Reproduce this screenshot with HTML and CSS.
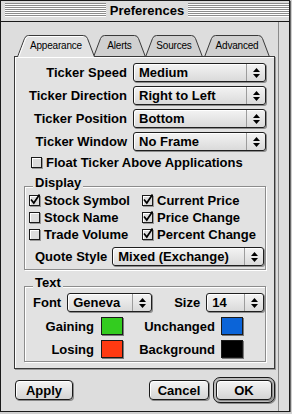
FILE: index.html
```html
<!DOCTYPE html>
<html lang="en">
<head>
  <meta charset="UTF-8" />
  <meta name="viewport" content="width=device-width, initial-scale=1" />
  <title>Preferences</title>
  <link rel="stylesheet" href="styles.css">
</head>
<body>
  <div class="window">
    <!-- Title bar -->
    <div class="titlebar">
      <span class="stripes"></span>
      <span class="title">Preferences</span>
      <span class="stripes"></span>
    </div>

    <div class="main">
      <!-- Tabs -->
      <div class="tabs">
        <div class="tab active tab-appearance">
          <svg width="78" height="22"><path class="edge" d="M0.5,22 L7.5,3.5 Q8.6,0.5 11.5,0.5 H66.5 Q69.4,0.5 70.5,3.5 L77.5,22"/><path class="shine" d="M1.9,21.5 L8.6,4 Q9.5,1.5 11.5,1.5 H66"/></svg>
          <span>Appearance</span>
        </div>
        <div class="tab tab-alerts">
          <svg width="53" height="22"><path class="edge" d="M0.5,22 L7.5,3.5 Q8.6,0.5 11.5,0.5 H41.5 Q44.4,0.5 45.5,3.5 L52.5,22"/></svg>
          <span>Alerts</span>
        </div>
        <div class="tab tab-sources">
          <svg width="58" height="22"><path class="edge" d="M0.5,22 L7.5,3.5 Q8.6,0.5 11.5,0.5 H46.5 Q49.4,0.5 50.5,3.5 L57.5,22"/></svg>
          <span>Sources</span>
        </div>
        <div class="tab tab-advanced">
          <svg width="66" height="22"><path class="edge" d="M0.5,22 L7.5,3.5 Q8.6,0.5 11.5,0.5 H54.5 Q57.4,0.5 58.5,3.5 L65.5,22"/></svg>
          <span>Advanced</span>
        </div>
      </div>

      <div class="panel">
        <div class="field">
          <span class="field-label">Ticker Speed</span>
          <div class="popup popup-wide"><span class="value">Medium</span><span class="arrows"><svg width="7" height="10"><path d="M0,4 L3.5,0 L7,4 Z M0,6 L7,6 L3.5,10 Z"/></svg></span></div>
        </div>
        <div class="field">
          <span class="field-label">Ticker Direction</span>
          <div class="popup popup-wide"><span class="value">Right to Left</span><span class="arrows"><svg width="7" height="10"><path d="M0,4 L3.5,0 L7,4 Z M0,6 L7,6 L3.5,10 Z"/></svg></span></div>
        </div>
        <div class="field">
          <span class="field-label">Ticker Position</span>
          <div class="popup popup-wide"><span class="value">Bottom</span><span class="arrows"><svg width="7" height="10"><path d="M0,4 L3.5,0 L7,4 Z M0,6 L7,6 L3.5,10 Z"/></svg></span></div>
        </div>
        <div class="field">
          <span class="field-label">Ticker Window</span>
          <div class="popup popup-wide"><span class="value">No Frame</span><span class="arrows"><svg width="7" height="10"><path d="M0,4 L3.5,0 L7,4 Z M0,6 L7,6 L3.5,10 Z"/></svg></span></div>
        </div>

        <label class="check check-float"><span class="box"></span>Float Ticker Above Applications</label>

        <!-- Display group -->
        <div class="group group-display">
          <span class="group-title">Display</span>
          <div class="check-grid">
            <label class="check"><span class="box"><svg width="12" height="12"><path d="M2,5.5 L4.8,9 L10.5,0.5"/></svg></span>Stock Symbol</label>
            <label class="check"><span class="box"><svg width="12" height="12"><path d="M2,5.5 L4.8,9 L10.5,0.5"/></svg></span>Current Price</label>
            <label class="check"><span class="box"></span>Stock Name</label>
            <label class="check"><span class="box"><svg width="12" height="12"><path d="M2,5.5 L4.8,9 L10.5,0.5"/></svg></span>Price Change</label>
            <label class="check"><span class="box"></span>Trade Volume</label>
            <label class="check"><span class="box"><svg width="12" height="12"><path d="M2,5.5 L4.8,9 L10.5,0.5"/></svg></span>Percent Change</label>
          </div>
          <div class="quote-row">
            <span class="quote-label">Quote Style</span>
            <div class="popup popup-quote"><span class="value">Mixed (Exchange)</span><span class="arrows"><svg width="7" height="10"><path d="M0,4 L3.5,0 L7,4 Z M0,6 L7,6 L3.5,10 Z"/></svg></span></div>
          </div>
        </div>

        <!-- Text group -->
        <div class="group group-text">
          <span class="group-title">Text</span>
          <div class="font-row">
            <span>Font</span>
            <div class="popup popup-font"><span class="value">Geneva</span><span class="arrows"><svg width="7" height="10"><path d="M0,4 L3.5,0 L7,4 Z M0,6 L7,6 L3.5,10 Z"/></svg></span></div>
            <span class="size-label">Size</span>
            <div class="popup popup-size"><span class="value">14</span><span class="arrows"><svg width="7" height="10"><path d="M0,4 L3.5,0 L7,4 Z M0,6 L7,6 L3.5,10 Z"/></svg></span></div>
          </div>
          <div class="swatch-row">
            <span class="swatch-label">Gaining</span>
            <span class="swatch green"></span>
            <span class="swatch-label wide">Unchanged</span>
            <span class="swatch blue"></span>
          </div>
          <div class="swatch-row lower">
            <span class="swatch-label">Losing</span>
            <span class="swatch red"></span>
            <span class="swatch-label wide">Background</span>
            <span class="swatch black"></span>
          </div>
        </div>
      </div>

      <!-- Buttons -->
      <div class="actions">
        <button class="btn btn-apply">Apply</button>
        <button class="btn btn-cancel">Cancel</button>
        <div class="default-ring"><button class="btn btn-ok">OK</button></div>
      </div>
    </div>
  </div>
</body>
</html>
```

FILE: styles.css
```css
* {
  box-sizing: border-box;
}

body {
  margin: 0;
  background: #cfcfcf;
  font-family: 'Liberation Sans', Arial, sans-serif;
  font-size: 13px;
  font-weight: bold;
  color: #000;
}

.window {
  width: 290px;
  height: 412px;
  border: 1px solid #1a1a1a;
  background: #dddddd;
  box-shadow: 1px 1px 0 #6a6a6a;
  display: flex;
  flex-direction: column;
}

/* Title bar */
.titlebar {
  height: 21px;
  border-bottom: 1px solid #1a1a1a;
  display: flex;
  align-items: flex-start;
  padding: 0 0 0 4px;
}

.stripes {
  flex: 1;
  height: 14px;
  margin-top: 2px;
  background: repeating-linear-gradient(#8c8c8c 0 1px, #ffffff 1px 2px);
}

.title {
  margin: 0 4px;
  line-height: 15px;
  margin-top: 2px;
}

.main {
  flex: 1;
  width: 278px;
  border-right: 1px solid #8a8a8a;
  padding: 13px 0 0 13px;
}

/* Tabs */
.tabs {
  display: flex;
  height: 22px;
  margin: 0 0 -1px 3px;
}

.tab {
  position: relative;
  height: 22px;
  display: flex;
  justify-content: center;
  font-size: 10px;
  font-weight: normal;
  line-height: 22px;
  letter-spacing: -0.2px;
}

.tab svg {
  position: absolute;
  left: 0;
  top: 0;
}

.tab span {
  position: relative;
}

.tab .edge {
  fill: #d0d0d0;
  stroke: #3a3a3a;
  stroke-width: 1;
}

.tab .shine {
  fill: none;
  stroke: #fff;
  stroke-width: 1;
}

.tab.active {
  z-index: 2;
}

.tab.active .edge {
  fill: #e2e2e2;
}

.tab-appearance { width: 78px; }
.tab-alerts { width: 53px; margin-left: -2px; }
.tab-sources { width: 58px; margin-left: -1px; }
.tab-advanced { width: 66px; margin-left: 1px; }

.panel {
  position: relative;
  z-index: 1;
  width: 261px;
  border: 1px solid #3a3a3a;
  background: #e2e2e2;
  box-shadow: inset 1px 1px 0 #fff, 1px 1px 0 #9a9a9a;
  padding: 6px 0 6px 0;
}

/* Labelled popups */
.field {
  display: flex;
  align-items: center;
  margin-bottom: 4px;
}

.field-label {
  width: 112px;
  margin-right: 6px;
  text-align: right;
  white-space: nowrap;
}

.popup {
  display: flex;
  height: 19px;
  border: 1px solid #1f1f1f;
  border-radius: 3px;
  background: linear-gradient(#f3f3f3, #dadada);
  box-shadow: 1px 1px 0 #8c8c8c, inset 1px 1px 0 #fff;
}

.popup .value {
  flex: 1;
  padding-left: 5px;
  line-height: 17px;
  white-space: nowrap;
  overflow: hidden;
}

.popup .arrows {
  width: 19px;
  border-left: 1px solid #9c9c9c;
  display: flex;
  align-items: center;
  justify-content: center;
}

.popup .arrows svg {
  fill: #000;
}

.popup-wide { width: 133px; }
.popup-quote { width: 152px; }
.popup-font { width: 85px; margin-left: 6px; }
.popup-size { width: 58px; margin-left: 6px; }

/* Checkboxes */
.check {
  display: flex;
  align-items: center;
  height: 17px;
  white-space: nowrap;
}

.box {
  position: relative;
  width: 11px;
  height: 11px;
  margin-right: 4px;
  border: 1px solid #1a1a1a;
  background: #dcdcdc;
  box-shadow: 1px 1px 0 #9a9a9a, inset 1px 1px 0 #fff;
  flex-shrink: 0;
}

.box svg {
  position: absolute;
  left: -1px;
  top: -2px;
  overflow: visible;
}

.box path {
  fill: none;
  stroke: #000;
  stroke-width: 1.7;
}

.check-float {
  margin: -1px 0 0 16px;
}

/* Group boxes */
.group {
  position: relative;
  width: 242px;
  margin-left: 9px;
  border: 1px solid #8c8c8c;
  box-shadow: 1px 1px 0 #fff, inset 1px 1px 0 #fff;
}

.group-title {
  position: absolute;
  top: -12px;
  left: 8px;
  padding: 0 2px;
  line-height: 15px;
  background: #e2e2e2;
}

.group-display {
  margin-top: 15px;
  padding: 5px 0 3px 4px;
}

.check-grid {
  display: grid;
  grid-template-columns: 113px 1fr;
}

.quote-row {
  display: flex;
  align-items: center;
  margin-top: 4px;
  padding-left: 6px;
}

.quote-label {
  margin-right: 5px;
}

.group-text {
  margin-top: 16px;
  padding: 6px 0 2px 8px;
}

.font-row {
  display: flex;
  align-items: center;
}

.size-label {
  margin-left: 22px;
}

.swatch-row {
  display: flex;
  align-items: center;
  height: 20px;
  margin: 4px 0 0 -8px;
}

.swatch-row.lower {
  margin-top: 3px;
}

.swatch-label {
  width: 69px;
  margin-right: 7px;
  text-align: right;
}

.swatch-label.wide {
  width: 92px;
  margin-right: 6px;
}

.swatch {
  width: 22px;
  height: 18px;
  border: 1px solid #1a1a1a;
  box-shadow: 1px 1px 0 #7a7a7a;
}

.green { background: #33cc1f; }
.red { background: #ff3a12; }
.blue { background: #0b64d8; }
.black { background: #000; }

/* Buttons */
.actions {
  display: flex;
  align-items: center;
  width: 261px;
  height: 26px;
  margin-top: 8px;
}

.btn {
  height: 20px;
  padding: 0;
  border: 1px solid #1a1a1a;
  border-radius: 4px;
  background: linear-gradient(#f4f4f4, #d4d4d4);
  box-shadow: 1px 1px 0 #8a8a8a, inset 1px 1px 0 #fff;
  font: bold 13px 'Liberation Sans', Arial, sans-serif;
  color: #000;
}

.btn-apply {
  width: 58px;
  margin-left: 1px;
}

.btn-cancel {
  width: 60px;
  margin-left: auto;
}

.default-ring {
  width: 62px;
  height: 26px;
  margin-left: 4px;
  padding: 2px;
  border: 1px solid #1a1a1a;
  border-radius: 7px;
  background: #bcbcbc;
  box-shadow: 1px 1px 0 #8a8a8a;
}

.btn-ok {
  width: 100%;
  display: block;
}
```
